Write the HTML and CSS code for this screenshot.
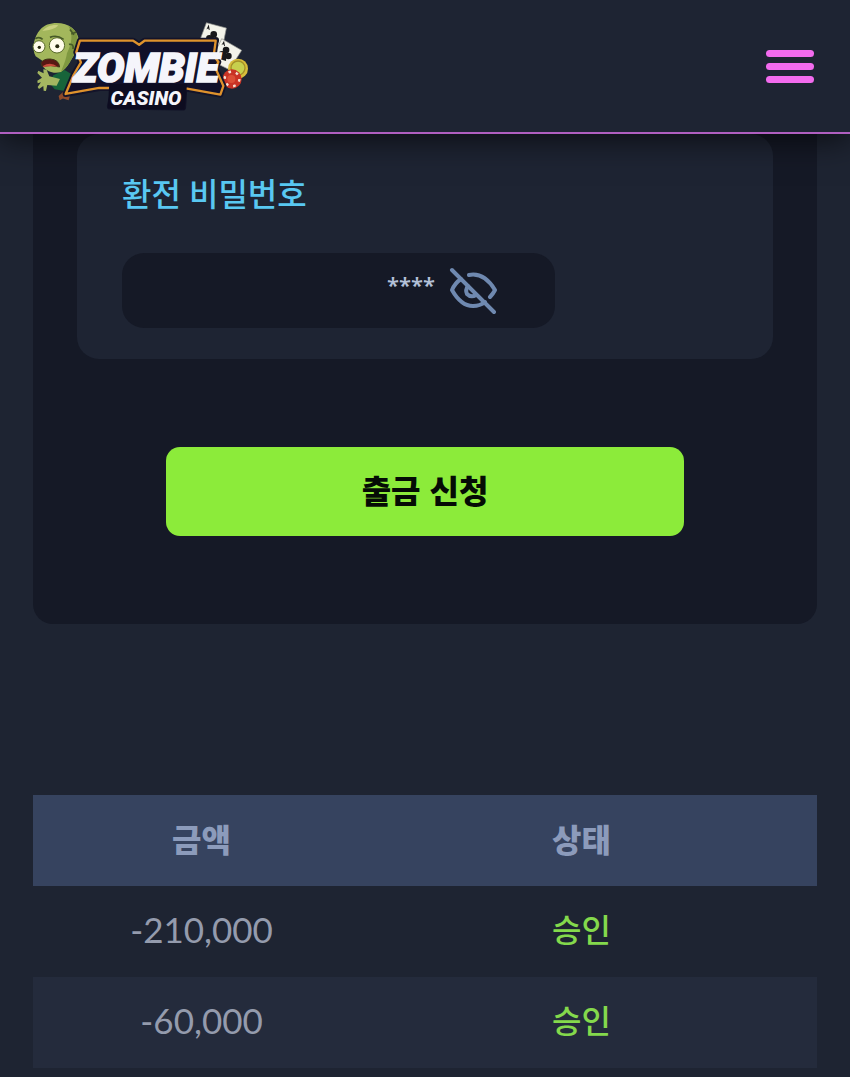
FILE: index.html
```html
<!DOCTYPE html>
<html lang="ko">
  <head>
    <meta charset="UTF-8" />
    <meta name="viewport" content="width=device-width, initial-scale=1.0" />
    <title>Zombie Casino</title>
    <link rel="stylesheet" href="styles.css" />
  </head>
  <body>
    <header class="header">
      <a class="logo" href="#" aria-label="Zombie Casino">
        <svg class="logo-svg" viewBox="30 30 670 276">
          <!-- cards -->
          <g stroke="#8b8c88" stroke-width="2">
            <path fill="#f3f3ea" d="M560 38l60 16-14 70-70-22z" />
            <path fill="#f3f3ea" d="M606 86l60 35-37 58-55-27z" />
          </g>
          <g fill="#171719">
            <circle cx="582" cy="73" r="10" />
            <circle cx="569" cy="85" r="10" />
            <circle cx="588" cy="91" r="10" />
            <path d="M577 80l-7 24 17 2-5-25z" />
            <circle cx="619" cy="120" r="10" />
            <circle cx="607" cy="133" r="10" />
            <circle cx="626" cy="138" r="10" />
            <path d="M615 126l-13 22 17 5 1-26z" />
            <path d="M560 58l7-15 3 17-3-1-1-4-3 1zM605 106l8-14 3 17-3-1v-4l-4-1z" />
          </g>
          <!-- chips -->
          <circle cx="655" cy="176" r="30" fill="#d8bd3b" />
          <circle cx="655" cy="174" r="21" fill="#c7d04d" stroke="#a39128" stroke-width="4" />
          <circle cx="637" cy="207" r="29" fill="#c93325" />
          <circle cx="637" cy="207" r="22" fill="none" stroke="#f4dfd1" stroke-width="7" stroke-dasharray="8 15" />
          <circle cx="635" cy="207" r="12" fill="#dc4e36" />
          <!-- zombie -->
          <path fill="#17643a" d="M100 196l34-16 24 14-20 50-34-6-16-20z" />
          <path fill="#a4b661" d="M55 182l16 8-1-12 10 1 8 20 32 8-10 20-28-2-4 18-7-1-1-14-13 9-4-6 10-14-10 3-1-8 14-9-14-14z" />
          <path fill="#a3b75c" d="M61 58c20-24 70-26 96-4 22 18 26 50 10 74-14 20-24 46-44 58-20 6-43 0-55-18l-1-16-20-13c-13-24-5-60 14-81z" />
          <path fill="#7f9840" d="M145 47c29 13 37 45 22 81-14 20-24 46-44 58 9-24 15-36 18-56 14-28 20-58 4-83z" />
          <path fill="#c9d080" d="M67 63c12-15 34-21 48-17-11 10-24 14-38 15z" />
          <path fill="none" stroke="#465a28" stroke-width="5" d="M46 86q12-8 22 2m22-6q20-9 41 6M150 58l12 16m-8-2l15-6M147 103q16-2 12 14" />
          <circle cx="57" cy="110" r="18" fill="#fffce9" stroke="#556728" stroke-width="3" />
          <circle cx="111" cy="106" r="23" fill="#fffce9" stroke="#556728" stroke-width="3" />
          <circle cx="58" cy="112" r="5" fill="#26280f" />
          <circle cx="112" cy="109" r="6" fill="#26280f" />
          <path fill="#581713" stroke="#3c3518" stroke-width="3" d="M63 158q8-12 28-11 26 2 28 24-28-8-53-2z" />
          <path fill="#c94a3b" d="M69 168q22-15 44 2-22-4-44 2z" />
          <path fill="#8f4b2b" d="M116 258l16-14 20 7-6 20-17-5-10 5z" />
          <!-- plate -->
          <path fill="#0d0c20" stroke="#101126" stroke-width="20" stroke-linejoin="round" d="M285 228h208l-4 64-218-3z" />
          <path fill="#11102a" stroke="#131329" stroke-width="18" stroke-linejoin="round" d="M180 92h160l18 12 16-12h214l-6 44 14 20-9 18 24 54-9 26-112-20H238l-101 18 24-57 22-38-14-30z" />
          <path fill="#11102a" stroke="#df922c" stroke-width="7" stroke-linejoin="round" d="M180 92h160l18 12 16-12h214l-6 44 14 20-9 18 24 54-9 26-112-20H238l-101 18 24-57 22-38-14-30z" />
          <path fill="#0d0c20" d="M268 222h234l-8 77-230-4z" />
          <text class="logo-name" x="160" y="215">ZOMBIE</text>
          <text class="logo-sub" x="272" y="286">CASINO</text>
        </svg>
      </a>
      <button class="menu-btn" type="button" aria-label="메뉴">
        <span class="menu-bar"></span>
        <span class="menu-bar"></span>
        <span class="menu-bar"></span>
      </button>
    </header>

    <main class="page">
      <form class="panel">
        <div class="card">
          <label class="card-label" for="withdrawPassword">환전 비밀번호</label>
          <div class="field">
            <input class="field-input" type="text" id="withdrawPassword" name="withdrawPassword" value="****" />
            <button class="eye-btn" type="button" aria-label="비밀번호 보기">
              <svg class="eye-icon" viewBox="0 0 48 48">
                <path d="M20 8Q35 5 46 23Q44 27 41 30" />
                <path d="M12 12Q6 16 3 23Q12 39 24 39Q31 39 36 35" />
                <path d="M19 19Q16 23 18 27Q22 31 27 28" />
                <path d="M3 3L45 45" />
              </svg>
            </button>
          </div>
        </div>
        <button class="submit-btn" type="submit">출금 신청</button>
      </form>

      <table class="history">
        <thead>
          <tr>
            <th>금액</th>
            <th>상태</th>
          </tr>
        </thead>
        <tbody>
          <tr>
            <td>-210,000</td>
            <td class="approved">승인</td>
          </tr>
          <tr>
            <td>-60,000</td>
            <td class="approved">승인</td>
          </tr>
        </tbody>
      </table>
    </main>
  </body>
</html>
```

FILE: styles.css
```css
* {
  box-sizing: border-box;
}
body {
  margin: 0;
  min-height: 100vh;
  background-color: #1e2432;
  color: #949bad;
  font-family: Lato, "Noto Sans CJK KR", sans-serif;
  font-size: 32px;
}
button,
input {
  font-family: inherit;
  border: none;
  background: none;
  padding: 0;
}
button {
  cursor: pointer;
}

/* header */
.header {
  position: sticky;
  top: 0;
  z-index: 10;
  display: flex;
  align-items: center;
  justify-content: space-between;
  height: 134px;
  padding: 0 36px 0 30px;
  background-color: #1e2433;
  border-bottom: 2px solid #b05fc0;
  box-shadow: 0 4px 32px rgba(0, 0, 0, 0.7);
}
.logo-svg {
  display: block;
  width: 223px;
  height: 92px;
}
.logo-name,
.logo-sub {
  font-family: Roboto, sans-serif;
  font-weight: 900;
  font-style: italic;
  fill: #f5f5fb;
}
.logo-name {
  font-size: 123px;
  stroke: #f5f5fb;
  stroke-width: 5px;
}
.logo-sub {
  font-size: 60px;
}
.menu-btn {
  display: flex;
  flex-direction: column;
  gap: 6px;
  width: 48px;
}
.menu-bar {
  height: 7px;
  border-radius: 4px;
  background-color: #f26bee;
}

/* withdraw form */
.page {
  padding: 0 33px;
}
.panel {
  padding: 0 44px 88px;
  background-color: #151926;
  border-radius: 0 0 20px 20px;
}
.card {
  padding: 37px 45px 31px;
  background-color: #1e2433;
  border-radius: 22px;
}
.card-label {
  display: block;
  line-height: 46px;
  font-weight: 500;
  color: #59c8f2;
}
.field {
  display: flex;
  align-items: center;
  justify-content: flex-end;
  gap: 14px;
  max-width: 433px;
  height: 75px;
  margin-top: 36px;
  padding: 0 58px 0 24px;
  background-color: #151926;
  border-radius: 22px;
}
.field-input {
  flex: 1;
  min-width: 0;
  height: 48px;
  padding-bottom: 14px;
  font-family: "Noto Sans", sans-serif;
  font-size: 22px;
  font-weight: 600;
  text-align: right;
  color: #b3c0d8;
  outline: none;
}
.eye-icon {
  display: block;
  width: 48px;
  height: 48px;
  fill: none;
  stroke: #6f89b0;
  stroke-width: 4;
  stroke-linecap: round;
  stroke-linejoin: round;
}
.submit-btn {
  display: block;
  width: 100%;
  max-width: 518px;
  height: 89px;
  margin: 88px auto 0;
  padding-bottom: 6px;
  font-family: "Noto Sans CJK KR", sans-serif;
  font-size: 32px;
  font-weight: 900;
  color: #050c05;
  background-color: #8ceb3a;
  border-radius: 14px;
}

/* history table */
.history {
  width: 100%;
  margin-top: 171px;
  border-collapse: collapse;
  table-layout: fixed;
}
.history th,
.history td {
  height: 91px;
  padding: 0 0 6px;
  text-align: center;
}
.history th {
  color: #8c9bbb;
  background-color: #36435f;
  font-weight: 900;
  font-family: "Noto Sans CJK KR", sans-serif;
}
.history th:first-child {
  width: 43%;
}
.history th:last-child,
.history td:last-child {
  padding-right: 24px;
}
.history td {
  font-size: 35px;
}
.history tbody tr:nth-child(even) {
  background-color: #242b3c;
}
.history .approved {
  font-size: 32px;
  font-weight: 500;
  padding-bottom: 8px;
  color: #84d94c;
}
```
